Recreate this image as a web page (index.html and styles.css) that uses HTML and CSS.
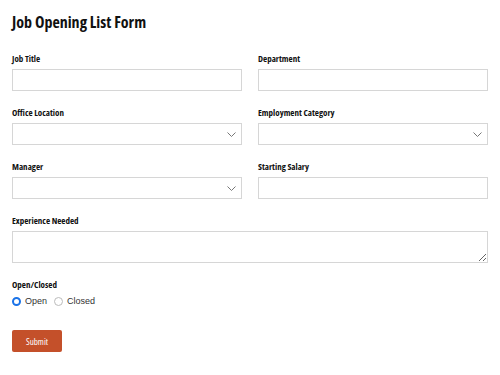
FILE: index.html
```html
<!DOCTYPE html>
<html>
<head>
<meta charset="utf-8">
<link rel="stylesheet" href="styles.css">
</head>
<body>
<form class="form">
  <h1 class="title">Job Opening List Form</h1>
  <div class="grid">
    <div class="field">
      <label class="label">Job Title</label>
      <input class="input" type="text">
    </div>
    <div class="field">
      <label class="label">Department</label>
      <input class="input" type="text">
    </div>
    <div class="field">
      <label class="label">Office Location</label>
      <div class="select"><span class="chev"><svg width="9" height="5" viewBox="0 0 9 5"><path d="M0.5 0.5 L4.5 4.5 L8.5 0.5" fill="none" stroke="#777" stroke-width="1"/></svg></span></div>
    </div>
    <div class="field">
      <label class="label">Employment Category</label>
      <div class="select"><span class="chev"><svg width="9" height="5" viewBox="0 0 9 5"><path d="M0.5 0.5 L4.5 4.5 L8.5 0.5" fill="none" stroke="#777" stroke-width="1"/></svg></span></div>
    </div>
    <div class="field">
      <label class="label">Manager</label>
      <div class="select"><span class="chev"><svg width="9" height="5" viewBox="0 0 9 5"><path d="M0.5 0.5 L4.5 4.5 L8.5 0.5" fill="none" stroke="#777" stroke-width="1"/></svg></span></div>
    </div>
    <div class="field">
      <label class="label">Starting Salary</label>
      <input class="input" type="text">
    </div>
    <div class="field wide">
      <label class="label">Experience Needed</label>
      <textarea class="textarea"></textarea>
    </div>
    <div class="field wide">
      <label class="label">Open/Closed</label>
      <div class="radios">
        <label class="radio"><span class="dot checked"></span>Open</label>
        <label class="radio"><span class="dot"></span>Closed</label>
      </div>
    </div>
  </div>
  <button class="submit" type="button">Submit</button>
</form>
</body>
</html>
```
FILE: styles.css
```css
html, body {
  margin: 0;
  padding: 0;
  background: #fff;
}
.form {
  padding: 10px 12px;
  font-family: "Open Sans", "Liberation Sans Narrow", sans-serif;
  color: #1a1a1a;
}
.title {
  margin: 0 0 18px 0;
  font-size: 16px;
  line-height: 24px;
  font-weight: 700;
  font-stretch: 75%;
  color: #111;
}
.grid {
  display: grid;
  grid-template-columns: 1fr 1fr;
  column-gap: 16px;
  row-gap: 15px;
}
.field {
  display: flex;
  flex-direction: column;
}
.wide {
  grid-column: 1 / 3;
}
.label {
  font-size: 9px;
  line-height: 14px;
  font-weight: 700;
  font-stretch: 75%;
  margin-bottom: 3px;
  color: #111;
}
.input, .select, .textarea {
  box-sizing: border-box;
  height: 22px;
  border: 1px solid #d6d6d6;
  background: #fff;
  margin: 0;
  padding: 0;
  width: 100%;
}
.select {
  display: flex;
  justify-content: flex-end;
  align-items: center;
  padding-right: 5px;
}
.chev {
  display: flex;
}
.textarea {
  height: 32px;
  resize: vertical;
}
.radios {
  display: flex;
  align-items: center;
  gap: 7px;
  margin-top: 1px;
}
.radio {
  display: flex;
  align-items: center;
  font-family: "Liberation Sans", Arial, sans-serif;
  font-size: 9px;
  color: #333;
}
.dot {
  box-sizing: border-box;
  width: 9px;
  height: 9px;
  border-radius: 50%;
  border: 1px solid #bbb;
  margin-right: 4px;
}
.dot.checked {
  border: 2.5px solid #1a73e8;
  background: #fff;
}
.submit {
  margin-top: 24px;
  width: 50px;
  height: 22px;
  border: none;
  border-radius: 2px;
  background: #c4502a;
  color: #fff;
  font-family: "Open Sans", sans-serif;
  font-stretch: 75%;
  font-size: 9px;
  padding: 0;
}
```
